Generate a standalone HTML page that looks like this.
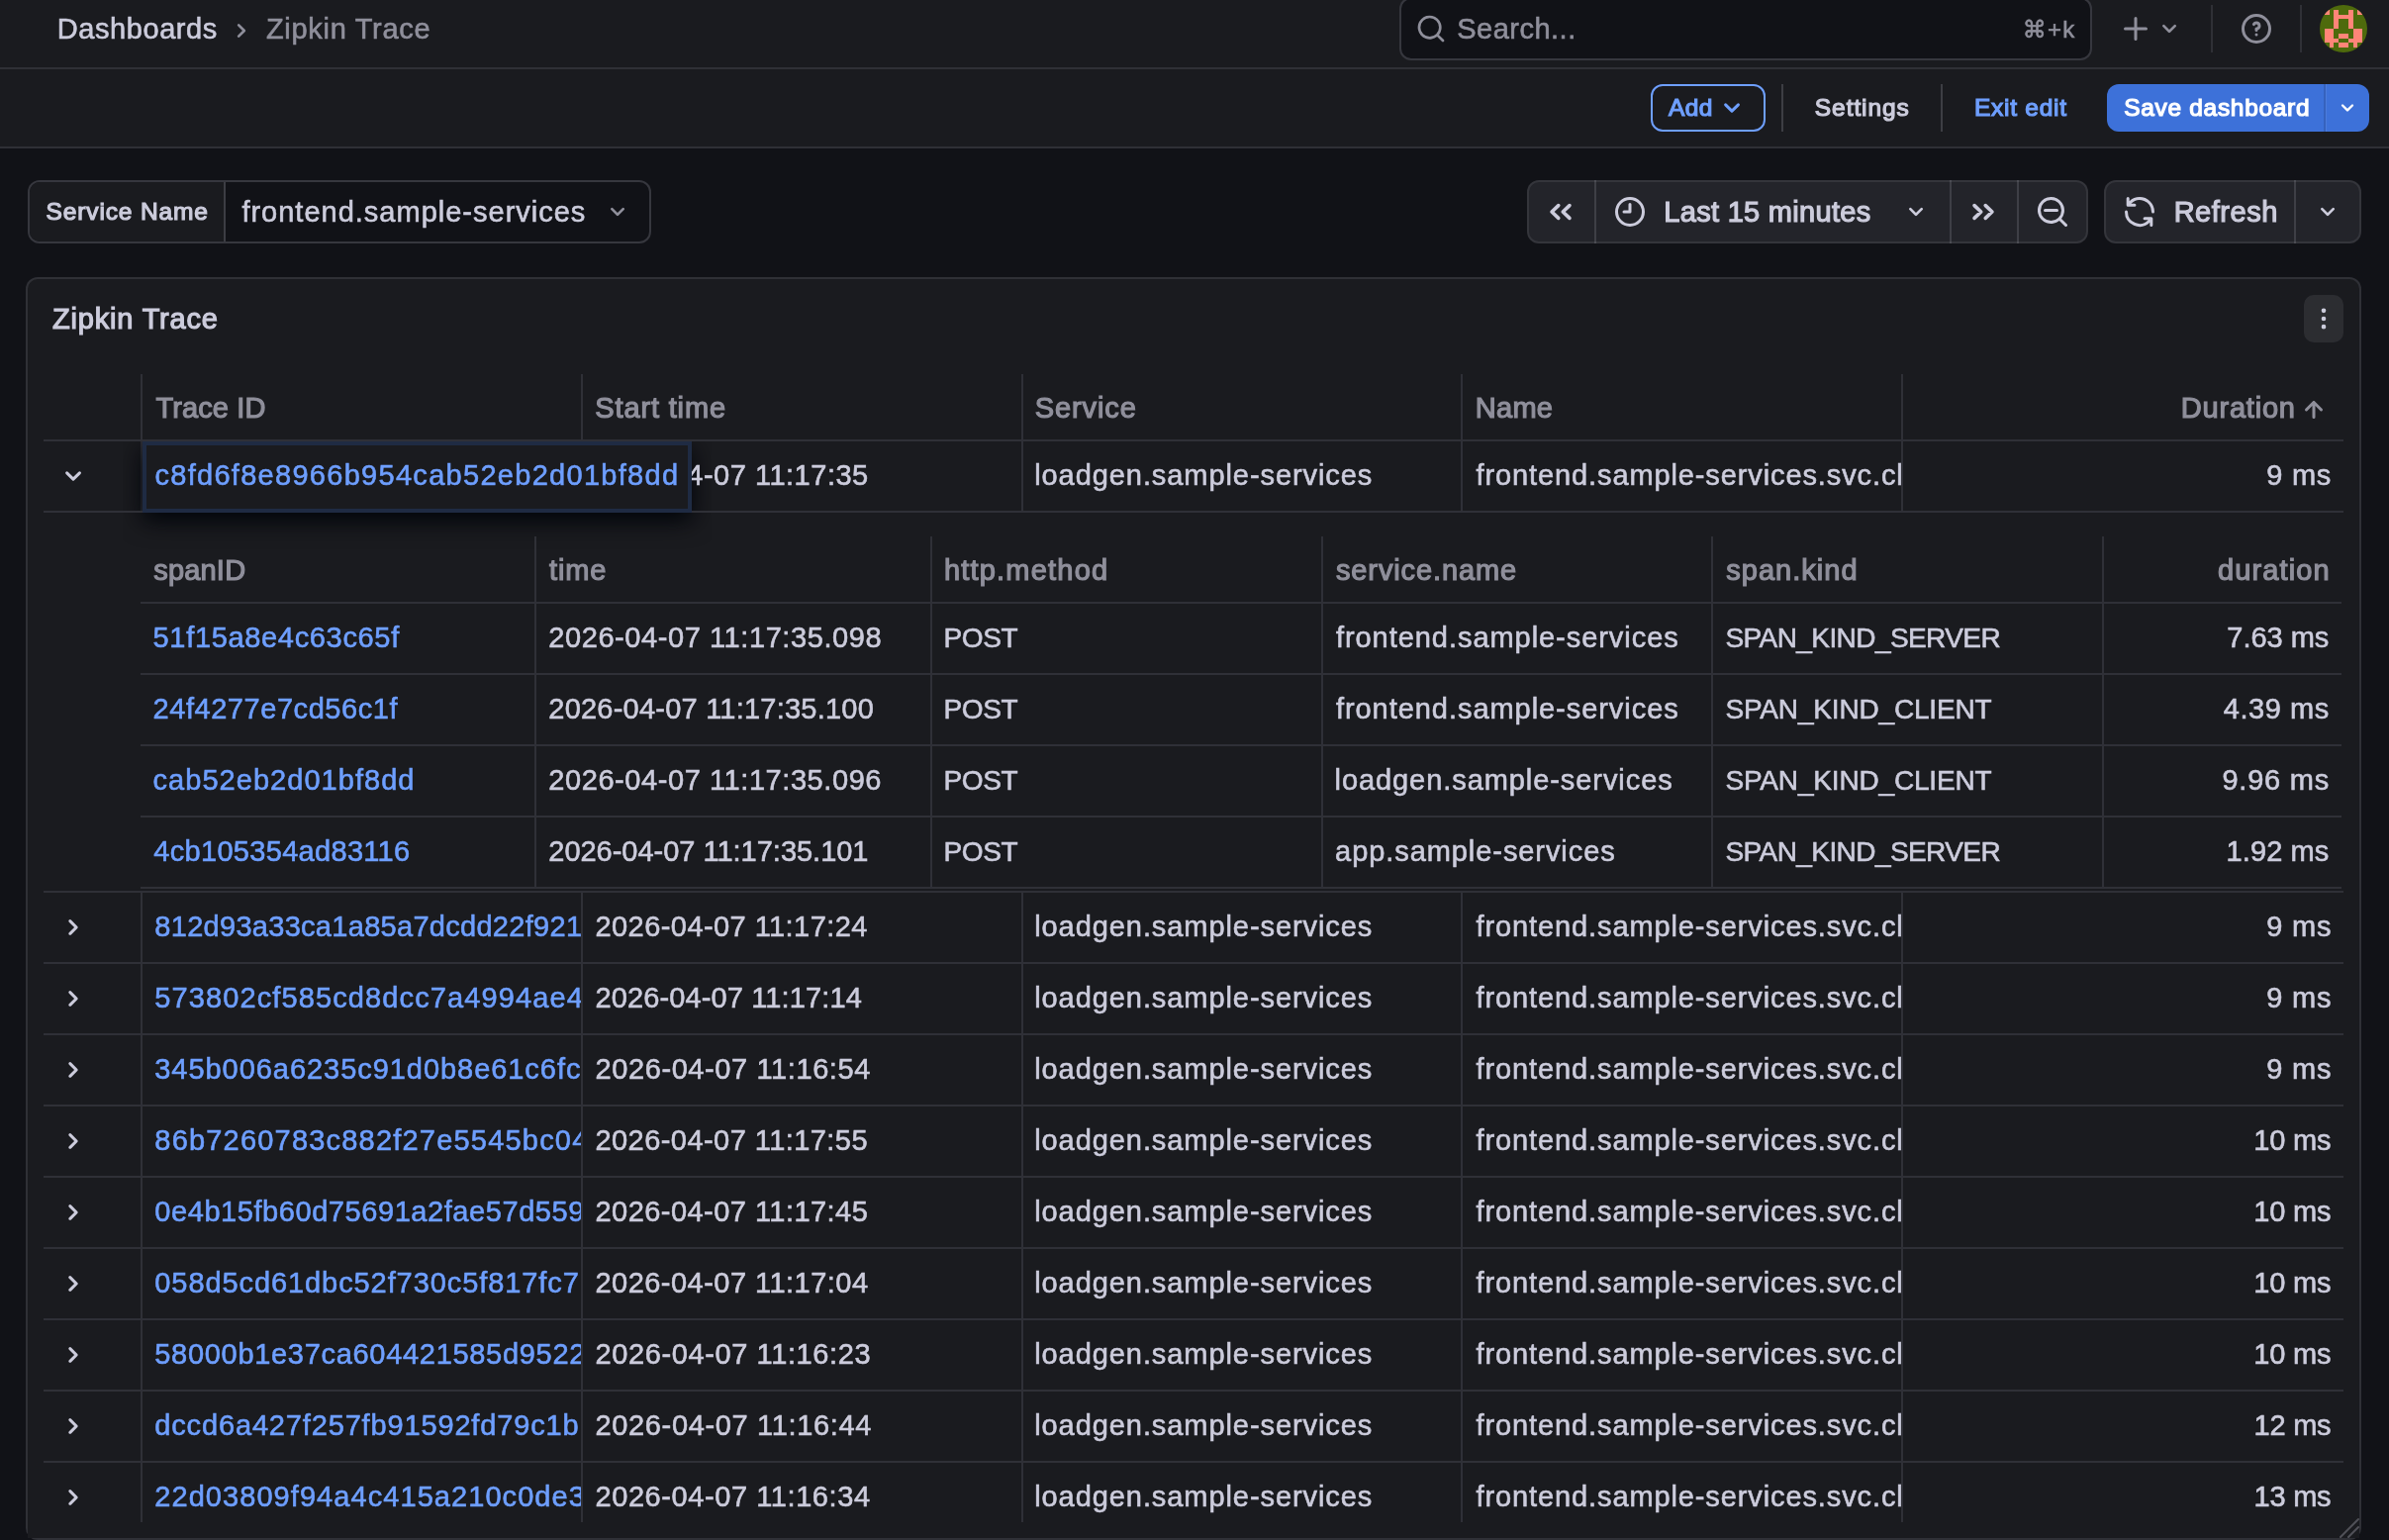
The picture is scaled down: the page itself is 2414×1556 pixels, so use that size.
<!DOCTYPE html>
<html lang="en"><head><meta charset="utf-8"><title>Zipkin Trace - Dashboards - Grafana</title>
<style>
html,body{margin:0;padding:0;background:#111217;}
body{width:2414px;height:1556px;overflow:hidden;position:relative;font-family:'Liberation Sans',sans-serif;}
.a{position:absolute;display:block;}
.t{position:absolute;white-space:pre;font-family:'Liberation Sans',sans-serif;font-weight:400;}
.clip{overflow:hidden;}
#root{position:absolute;left:0;top:0;width:2414px;height:1556px;will-change:transform;}
</style></head><body><div id="root">
<div class="a" style="left:0px;top:0px;width:2414px;height:150px;background:#1a1b1f;"></div>
<div class="a" style="left:0px;top:68px;width:2414px;height:2px;background:rgba(204,204,220,0.12);"></div>
<div class="a" style="left:0px;top:148px;width:2414px;height:2px;background:rgba(204,204,220,0.12);"></div>
<span class="t" style="left:57.72px;top:13.00px;font-size:29px;line-height:32px;letter-spacing:0.579px;color:#ccccdc;-webkit-text-stroke:0.6px currentColor;">Dashboards</span>
<svg class="a" style="left:227.5px;top:15.0px" width="32" height="32" viewBox="0 0 24 24" fill="#8f8f9b"><path d="M14.83,11.29,10.59,7.05a1,1,0,0,0-1.42,0,1,1,0,0,0,0,1.41L12.71,12,9.17,15.54a1,1,0,0,0,0,1.41,1,1,0,0,0,.71.29,1,1,0,0,0,.71-.29l4.24-4.24A1,1,0,0,0,14.83,11.29Z"/></svg>
<span class="t" style="left:268.92px;top:13.00px;font-size:29px;line-height:32px;letter-spacing:0.700px;color:#8f8f9b;-webkit-text-stroke:0.6px currentColor;">Zipkin Trace</span>
<div class="a" style="left:1414px;top:-3px;width:700px;height:64px;box-sizing:border-box;border:2px solid rgba(204,204,220,0.20);border-radius:12px;background:#111217"></div>
<svg class="a" style="left:1430.0px;top:13.0px" width="32" height="32" viewBox="0 0 24 24" fill="#8f8f9b"><path d="M21.71,20.29,18,16.61A9,9,0,1,0,16.61,18l3.68,3.68a1,1,0,0,0,1.42,0A1,1,0,0,0,21.71,20.29ZM11,18a7,7,0,1,1,7-7A7,7,0,0,1,11,18Z"/></svg>
<span class="t" style="left:1472.21px;top:13.00px;font-size:29px;line-height:32px;letter-spacing:0.497px;color:#8f8f9b;-webkit-text-stroke:0.6px currentColor;">Search...</span>
<span class="t" style="left:2043.85px;top:16.00px;font-size:24px;line-height:27px;letter-spacing:1.233px;color:#8f8f9b;font-family:'Liberation Sans','DejaVu Sans',sans-serif;-webkit-text-stroke:0.6px currentColor;">⌘+k</span>
<svg class="a" style="left:2140.0px;top:11.0px" width="36" height="36" viewBox="0 0 24 24" fill="#8f8f9b"><path d="M19,11H13V5a1,1,0,0,0-2,0v6H5a1,1,0,0,0,0,2h6v6a1,1,0,0,0,2,0V13h6a1,1,0,0,0,0-2Z"/></svg>
<svg class="a" style="left:2176.0px;top:13.0px" width="32" height="32" viewBox="0 0 24 24" fill="#8f8f9b"><path d="M17,9.17a1,1,0,0,0-1.41,0L12,12.71,8.46,9.17a1,1,0,0,0-1.41,0,1,1,0,0,0,0,1.42l4.24,4.24a1,1,0,0,0,1.42,0L17,10.59A1,1,0,0,0,17,9.17Z"/></svg>
<div class="a" style="left:2234px;top:5px;width:2px;height:48px;background:rgba(204,204,220,0.12);"></div>
<svg class="a" style="left:2262.0px;top:11.0px" width="36" height="36" viewBox="0 0 24 24" fill="#8f8f9b"><path d="M11.29,15.29a1.58,1.58,0,0,0-.12.15.76.76,0,0,0-.09.18.64.64,0,0,0-.06.18,1.36,1.36,0,0,0,0,.2.84.84,0,0,0,.08.38.9.9,0,0,0,.54.54.94.94,0,0,0,.76,0,.9.9,0,0,0,.54-.54A1,1,0,0,0,13,16a1,1,0,0,0-.29-.71A1,1,0,0,0,11.29,15.29ZM12,2A10,10,0,1,0,22,12,10,10,0,0,0,12,2Zm0,18a8,8,0,1,1,8-8A8,8,0,0,1,12,20ZM12,7A3,3,0,0,0,9.4,8.5a1,1,0,1,0,1.73,1A1,1,0,0,1,12,9a1,1,0,0,1,0,2,1,1,0,0,0-1,1v1a1,1,0,0,0,2,0v-.18A3,3,0,0,0,12,7Z"/></svg>
<div class="a" style="left:2324px;top:5px;width:2px;height:48px;background:rgba(204,204,220,0.12);"></div>
<svg class="a" style="left:2344px;top:5px" width="48" height="48" viewBox="0 0 48 48" shape-rendering="crispEdges"><defs><clipPath id="av"><circle cx="24" cy="24" r="24"/></clipPath></defs><g clip-path="url(#av)"><rect width="48" height="48" fill="#4e6a0c"/><rect x="4.80" y="4.80" width="4.80" height="4.80" fill="#ff8578"/><rect x="14.40" y="4.80" width="4.80" height="4.80" fill="#ff8578"/><rect x="28.80" y="4.80" width="4.80" height="4.80" fill="#ff8578"/><rect x="38.40" y="4.80" width="4.80" height="4.80" fill="#ff8578"/><rect x="14.40" y="9.60" width="4.80" height="4.80" fill="#ff8578"/><rect x="19.20" y="9.60" width="4.80" height="4.80" fill="#ff8578"/><rect x="24.00" y="9.60" width="4.80" height="4.80" fill="#ff8578"/><rect x="28.80" y="9.60" width="4.80" height="4.80" fill="#ff8578"/><rect x="14.40" y="14.40" width="4.80" height="4.80" fill="#ff8578"/><rect x="28.80" y="14.40" width="4.80" height="4.80" fill="#ff8578"/><rect x="14.40" y="19.20" width="4.80" height="4.80" fill="#ff8578"/><rect x="28.80" y="19.20" width="4.80" height="4.80" fill="#ff8578"/><rect x="4.80" y="24.00" width="4.80" height="4.80" fill="#ff8578"/><rect x="9.60" y="24.00" width="4.80" height="4.80" fill="#ff8578"/><rect x="33.60" y="24.00" width="4.80" height="4.80" fill="#ff8578"/><rect x="38.40" y="24.00" width="4.80" height="4.80" fill="#ff8578"/><rect x="4.80" y="28.80" width="4.80" height="4.80" fill="#ff8578"/><rect x="9.60" y="28.80" width="4.80" height="4.80" fill="#ff8578"/><rect x="19.20" y="28.80" width="4.80" height="4.80" fill="#ff8578"/><rect x="24.00" y="28.80" width="4.80" height="4.80" fill="#ff8578"/><rect x="33.60" y="28.80" width="4.80" height="4.80" fill="#ff8578"/><rect x="38.40" y="28.80" width="4.80" height="4.80" fill="#ff8578"/><rect x="4.80" y="33.60" width="4.80" height="4.80" fill="#ff8578"/><rect x="9.60" y="33.60" width="4.80" height="4.80" fill="#ff8578"/><rect x="14.40" y="33.60" width="4.80" height="4.80" fill="#ff8578"/><rect x="28.80" y="33.60" width="4.80" height="4.80" fill="#ff8578"/><rect x="33.60" y="33.60" width="4.80" height="4.80" fill="#ff8578"/><rect x="38.40" y="33.60" width="4.80" height="4.80" fill="#ff8578"/><rect x="9.60" y="38.40" width="4.80" height="4.80" fill="#ff8578"/><rect x="19.20" y="38.40" width="4.80" height="4.80" fill="#ff8578"/><rect x="24.00" y="38.40" width="4.80" height="4.80" fill="#ff8578"/><rect x="33.60" y="38.40" width="4.80" height="4.80" fill="#ff8578"/></g></svg>
<div class="a" style="left:1668px;top:85px;width:116px;height:48px;box-sizing:border-box;border:2px solid #6e9fff;border-radius:12px"></div>
<span class="t" style="left:1685.91px;top:95.00px;font-size:24.5px;line-height:27px;letter-spacing:0.431px;color:#6e9fff;-webkit-text-stroke:1.2px currentColor;">Add</span>
<svg class="a" style="left:1732.2px;top:91.2px" width="36" height="36" viewBox="0 0 24 24" fill="#6e9fff"><path d="M17,9.17a1,1,0,0,0-1.41,0L12,12.71,8.46,9.17a1,1,0,0,0-1.41,0,1,1,0,0,0,0,1.42l4.24,4.24a1,1,0,0,0,1.42,0L17,10.59A1,1,0,0,0,17,9.17Z"/></svg>
<div class="a" style="left:1800px;top:85px;width:2px;height:48px;background:rgba(204,204,220,0.20);"></div>
<span class="t" style="left:1833.83px;top:95.00px;font-size:24.5px;line-height:27px;letter-spacing:0.925px;color:#ccccdc;-webkit-text-stroke:1.2px currentColor;">Settings</span>
<div class="a" style="left:1961px;top:85px;width:2px;height:48px;background:rgba(204,204,220,0.20);"></div>
<span class="t" style="left:1994.96px;top:95.00px;font-size:24.5px;line-height:27px;letter-spacing:0.747px;color:#6e9fff;-webkit-text-stroke:1.2px currentColor;">Exit edit</span>
<div class="a" style="left:2129px;top:85px;width:265px;height:48px;border-radius:12px;background:#3d71d9"></div>
<div class="a" style="left:2348px;top:85px;width:2px;height:48px;background:rgba(0,0,0,0.13);"></div>
<div class="a" style="left:2350px;top:85px;width:1px;height:48px;background:rgba(255,255,255,0.08);"></div>
<span class="t" style="left:2146.24px;top:95.00px;font-size:24.5px;line-height:27px;letter-spacing:0.683px;color:#ffffff;-webkit-text-stroke:1.2px currentColor;">Save dashboard</span>
<svg class="a" style="left:2358.0px;top:95.0px" width="28" height="28" viewBox="0 0 24 24" fill="#ffffff"><path d="M17,9.17a1,1,0,0,0-1.41,0L12,12.71,8.46,9.17a1,1,0,0,0-1.41,0,1,1,0,0,0,0,1.42l4.24,4.24a1,1,0,0,0,1.42,0L17,10.59A1,1,0,0,0,17,9.17Z"/></svg>
<div class="a" style="left:28px;top:182px;width:630px;height:64px;box-sizing:border-box;border:2px solid rgba(204,204,220,0.20);border-radius:12px;background:#111217;overflow:hidden"><div class="a" style="left:0;top:0;width:196px;height:60px;background:#1a1b1f;border-right:2px solid rgba(204,204,220,0.20)"></div></div>
<span class="t" style="left:46.62px;top:200.00px;font-size:24.5px;line-height:27px;letter-spacing:0.864px;color:#ccccdc;-webkit-text-stroke:1.2px currentColor;">Service Name</span>
<span class="t" style="left:244.42px;top:198.00px;font-size:29px;line-height:32px;letter-spacing:0.999px;color:#ccccdc;-webkit-text-stroke:0.6px currentColor;">frontend.sample-services</span>
<svg class="a" style="left:608.0px;top:198.0px" width="32" height="32" viewBox="0 0 24 24" fill="#8f8f9b"><path d="M17,9.17a1,1,0,0,0-1.41,0L12,12.71,8.46,9.17a1,1,0,0,0-1.41,0,1,1,0,0,0,0,1.42l4.24,4.24a1,1,0,0,0,1.42,0L17,10.59A1,1,0,0,0,17,9.17Z"/></svg>
<div class="a" style="left:1543px;top:182px;width:567px;height:64px;box-sizing:border-box;border:2px solid rgba(204,204,220,0.10);border-radius:12px;background:#23242a"></div>
<div class="a" style="left:1611px;top:182px;width:2px;height:64px;background:rgba(204,204,220,0.16);"></div>
<div class="a" style="left:1970px;top:182px;width:2px;height:64px;background:rgba(204,204,220,0.16);"></div>
<div class="a" style="left:2038px;top:182px;width:2px;height:64px;background:rgba(204,204,220,0.16);"></div>
<svg class="a" style="left:0;top:0" width="2414" height="300" viewBox="0 0 2414 300" fill="none" stroke="#ccccdc" stroke-width="3.6" stroke-linecap="round" stroke-linejoin="round"><path d="M1574.75,207.60L1568.05,214.00L1574.75,220.40 M1585.95,207.60L1579.25,214.00L1585.95,220.40"/></svg>
<svg class="a" style="left:1629.0px;top:196.0px" width="36" height="36" viewBox="0 0 24 24" fill="#ccccdc"><path d="M12,2A10,10,0,1,0,22,12,10,10,0,0,0,12,2Zm0,18a8,8,0,1,1,8-8A8,8,0,0,1,12,20ZM12,6a1,1,0,0,0-1,1v4H8a1,1,0,0,0,0,2h4a1,1,0,0,0,1-1V7A1,1,0,0,0,12,6Z"/></svg>
<span class="t" style="left:1681.33px;top:198.00px;font-size:29px;line-height:32px;letter-spacing:0.294px;color:#ccccdc;-webkit-text-stroke:1.2px currentColor;">Last 15 minutes</span>
<svg class="a" style="left:1920.0px;top:198.0px" width="32" height="32" viewBox="0 0 24 24" fill="#ccccdc"><path d="M17,9.17a1,1,0,0,0-1.41,0L12,12.71,8.46,9.17a1,1,0,0,0-1.41,0,1,1,0,0,0,0,1.42l4.24,4.24a1,1,0,0,0,1.42,0L17,10.59A1,1,0,0,0,17,9.17Z"/></svg>
<svg class="a" style="left:0;top:0" width="2414" height="300" viewBox="0 0 2414 300" fill="none" stroke="#ccccdc" stroke-width="3.6" stroke-linecap="round" stroke-linejoin="round"><path d="M1995.05,207.60L2001.75,214.00L1995.05,220.40 M2006.25,207.60L2012.95,214.00L2006.25,220.40"/></svg>
<svg class="a" style="left:2056.0px;top:196.0px" width="36" height="36" viewBox="0 0 24 24" fill="#ccccdc"><path d="M21.71,20.29,18,16.61A9,9,0,1,0,16.61,18l3.68,3.68a1,1,0,0,0,1.42,0A1,1,0,0,0,21.71,20.29ZM11,18a7,7,0,1,1,7-7A7,7,0,0,1,11,18ZM15,10H7a1,1,0,0,0,0,2h8a1,1,0,0,0,0-2Z"/></svg>
<div class="a" style="left:2126px;top:182px;width:260px;height:64px;box-sizing:border-box;border:2px solid rgba(204,204,220,0.10);border-radius:12px;background:#23242a"></div>
<div class="a" style="left:2318px;top:182px;width:2px;height:64px;background:rgba(204,204,220,0.16);"></div>
<svg class="a" style="left:2144.0px;top:196.0px" width="36" height="36" viewBox="0 0 24 24" fill="#ccccdc"><path d="M19.91,15.51H15.38a1,1,0,0,0,0,2h2.4A8,8,0,0,1,4,12a1,1,0,0,0-2,0,10,10,0,0,0,16.88,7.23V21a1,1,0,0,0,2,0V16.5A1,1,0,0,0,19.91,15.51ZM12,2A10,10,0,0,0,5.12,4.77V3a1,1,0,0,0-2,0V7.5a1,1,0,0,0,1,1h4.5a1,1,0,0,0,0-2H6.22A8,8,0,0,1,20,12a1,1,0,0,0,2,0A10,10,0,0,0,12,2Z"/></svg>
<span class="t" style="left:2196.66px;top:198.00px;font-size:29px;line-height:32px;letter-spacing:0.512px;color:#ccccdc;-webkit-text-stroke:1.2px currentColor;">Refresh</span>
<svg class="a" style="left:2336.0px;top:198.0px" width="32" height="32" viewBox="0 0 24 24" fill="#ccccdc"><path d="M17,9.17a1,1,0,0,0-1.41,0L12,12.71,8.46,9.17a1,1,0,0,0-1.41,0,1,1,0,0,0,0,1.42l4.24,4.24a1,1,0,0,0,1.42,0L17,10.59A1,1,0,0,0,17,9.17Z"/></svg>
<div class="a" style="left:26px;top:280px;width:2360px;height:1276px;box-sizing:border-box;border:2px solid rgba(204,204,220,0.12);border-radius:12px;background:#1a1b1f"></div>
<span class="t" style="left:53.01px;top:306.00px;font-size:29px;line-height:32px;letter-spacing:0.822px;color:#ccccdc;-webkit-text-stroke:1.2px currentColor;">Zipkin Trace</span>
<div class="a" style="left:2328px;top:298px;width:40px;height:48px;border-radius:10px;background:rgba(204,204,220,0.10)"></div>
<svg class="a" style="left:2334.0px;top:308.0px" width="28" height="28" viewBox="0 0 24 24" fill="#ccccdc"><path d="M12,7a2,2,0,1,0-2-2A2,2,0,0,0,12,7Zm0,10a2,2,0,1,0,2,2A2,2,0,0,0,12,17Zm0-7a2,2,0,1,0,2,2A2,2,0,0,0,12,10Z"/></svg>
<div class="a" style="left:142px;top:378px;width:2px;height:1160px;background:#2f3037;"></div>
<div class="a" style="left:587px;top:378px;width:2px;height:1160px;background:#2f3037;"></div>
<div class="a" style="left:1032px;top:378px;width:2px;height:1160px;background:#2f3037;"></div>
<div class="a" style="left:1476px;top:378px;width:2px;height:1160px;background:#2f3037;"></div>
<div class="a" style="left:1921px;top:378px;width:2px;height:1160px;background:#2f3037;"></div>
<div class="a" style="left:44px;top:444px;width:2324px;height:2px;background:#2f3037;"></div>
<span class="t" style="left:157.43px;top:396.00px;font-size:29px;line-height:32px;letter-spacing:0.119px;color:#8f8f9b;-webkit-text-stroke:1.2px currentColor;">Trace ID</span>
<span class="t" style="left:601.32px;top:396.00px;font-size:29px;line-height:32px;letter-spacing:0.847px;color:#8f8f9b;-webkit-text-stroke:1.2px currentColor;">Start time</span>
<span class="t" style="left:1045.75px;top:396.00px;font-size:29px;line-height:32px;letter-spacing:0.898px;color:#8f8f9b;-webkit-text-stroke:1.2px currentColor;">Service</span>
<span class="t" style="left:1490.81px;top:396.00px;font-size:29px;line-height:32px;letter-spacing:0.278px;color:#8f8f9b;-webkit-text-stroke:1.2px currentColor;">Name</span>
<span class="t" style="left:2203.83px;top:396.00px;font-size:29px;line-height:32px;letter-spacing:0.785px;color:#8f8f9b;-webkit-text-stroke:1.2px currentColor;">Duration</span>
<svg class="a" style="left:2320.0px;top:396.0px" width="36" height="36" viewBox="0 0 24 24" fill="#8f8f9b"><path d="M17.71,11.29l-5-5a1,1,0,0,0-.33-.21,1,1,0,0,0-.76,0,1,1,0,0,0-.33.21l-5,5a1,1,0,0,0,1.42,1.42L11,9.41V17a1,1,0,0,0,2,0V9.41l3.29,3.3a1,1,0,0,0,1.42,0A1,1,0,0,0,17.71,11.29Z"/></svg>
<div class="a" style="left:44px;top:518px;width:2324px;height:382px;background:#1a1b1f;"></div>
<div class="a" style="left:44px;top:900px;width:2324px;height:2px;background:#2f3037;"></div>
<div class="a" style="left:144px;top:446px;width:555px;height:72px;box-shadow:0 8px 24px rgb(1,4,9);clip-path:inset(0 -20px -48px -20px)"></div>
<div class="a" style="left:44px;top:516px;width:2324px;height:2px;background:#2f3037;"></div>
<svg class="a" style="left:56.0px;top:462.5px" width="36" height="36" viewBox="0 0 24 24" fill="#ccccdc"><path d="M17,9.17a1,1,0,0,0-1.41,0L12,12.71,8.46,9.17a1,1,0,0,0-1.41,0,1,1,0,0,0,0,1.42l4.24,4.24a1,1,0,0,0,1.42,0L17,10.59A1,1,0,0,0,17,9.17Z"/></svg>
<span class="t" style="left:600.90px;top:464.00px;font-size:29px;line-height:32px;letter-spacing:0.511px;color:#ccccdc;-webkit-text-stroke:0.6px currentColor;">2026-04-07 11:17:35</span>
<span class="t" style="left:1045.20px;top:464.00px;font-size:29px;line-height:32px;letter-spacing:0.927px;color:#ccccdc;-webkit-text-stroke:0.6px currentColor;">loadgen.sample-services</span>
<div class="a clip" id="n0" style="left:1478px;top:446px;width:443px;height:70px"><span class="t" style="left:13.50px;top:18.00px;font-size:29px;line-height:32px;letter-spacing:0.891px;color:#ccccdc;-webkit-text-stroke:0.6px currentColor;">frontend.sample-services.svc.cl<span style="padding-left:8px">uster.local</span></span></div>
<span class="t" style="left:2290.24px;top:464.00px;font-size:29px;line-height:32px;letter-spacing:0.738px;color:#ccccdc;-webkit-text-stroke:0.6px currentColor;">9 ms</span>
<div class="a" style="left:144px;top:446px;width:555px;height:72px;box-sizing:border-box;border:4px solid #1f2b43;background:#1a1b1f"></div>
<span class="t" style="left:156.48px;top:464.00px;font-size:29px;line-height:32px;letter-spacing:1.288px;color:#6e9fff;-webkit-text-stroke:0.6px currentColor;">c8fd6f8e8966b954cab52eb2d01bf8dd</span>
<div class="a" style="left:540px;top:542px;width:2px;height:355px;background:#2f3037;"></div>
<div class="a" style="left:940px;top:542px;width:2px;height:355px;background:#2f3037;"></div>
<div class="a" style="left:1335px;top:542px;width:2px;height:355px;background:#2f3037;"></div>
<div class="a" style="left:1729px;top:542px;width:2px;height:355px;background:#2f3037;"></div>
<div class="a" style="left:2124px;top:542px;width:2px;height:355px;background:#2f3037;"></div>
<div class="a" style="left:142px;top:608px;width:2224px;height:2px;background:#2f3037;"></div>
<div class="a" style="left:142px;top:680px;width:2224px;height:2px;background:#2f3037;"></div>
<div class="a" style="left:142px;top:752px;width:2224px;height:2px;background:#2f3037;"></div>
<div class="a" style="left:142px;top:824px;width:2224px;height:2px;background:#2f3037;"></div>
<div class="a" style="left:142px;top:896px;width:2224px;height:2px;background:#2f3037;"></div>
<span class="t" style="left:155.18px;top:560.00px;font-size:29px;line-height:32px;letter-spacing:0.204px;color:#8f8f9b;-webkit-text-stroke:1.2px currentColor;">spanID</span>
<span class="t" style="left:554.93px;top:560.00px;font-size:29px;line-height:32px;letter-spacing:0.897px;color:#8f8f9b;-webkit-text-stroke:1.2px currentColor;">time</span>
<span class="t" style="left:953.88px;top:560.00px;font-size:29px;line-height:32px;letter-spacing:1.206px;color:#8f8f9b;-webkit-text-stroke:1.2px currentColor;">http.method</span>
<span class="t" style="left:1349.92px;top:560.00px;font-size:29px;line-height:32px;letter-spacing:0.898px;color:#8f8f9b;-webkit-text-stroke:1.2px currentColor;">service.name</span>
<span class="t" style="left:1744.21px;top:560.00px;font-size:29px;line-height:32px;letter-spacing:1.022px;color:#8f8f9b;-webkit-text-stroke:1.2px currentColor;">span.kind</span>
<span class="t" style="left:2241.01px;top:560.00px;font-size:29px;line-height:32px;letter-spacing:1.126px;color:#8f8f9b;-webkit-text-stroke:1.2px currentColor;">duration</span>
<span class="t" style="left:154.59px;top:628.00px;font-size:29px;line-height:32px;letter-spacing:0.664px;color:#6e9fff;-webkit-text-stroke:0.6px currentColor;">51f15a8e4c63c65f</span>
<span class="t" style="left:554.29px;top:628.00px;font-size:29px;line-height:32px;letter-spacing:0.577px;color:#ccccdc;-webkit-text-stroke:0.6px currentColor;">2026-04-07 11:17:35.098</span>
<span class="t" style="left:953.49px;top:629.00px;font-size:28px;line-height:31px;letter-spacing:-0.352px;color:#ccccdc;-webkit-text-stroke:0.6px currentColor;">POST</span>
<span class="t" style="left:1349.95px;top:628.00px;font-size:29px;line-height:32px;letter-spacing:0.948px;color:#ccccdc;-webkit-text-stroke:0.6px currentColor;">frontend.sample-services</span>
<span class="t" style="left:1743.42px;top:629.00px;font-size:28px;line-height:31px;letter-spacing:-0.572px;color:#ccccdc;-webkit-text-stroke:0.6px currentColor;">SPAN_KIND_SERVER</span>
<span class="t" style="left:2250.37px;top:628.00px;font-size:29px;line-height:32px;letter-spacing:-0.038px;color:#ccccdc;-webkit-text-stroke:0.6px currentColor;">7.63 ms</span>
<span class="t" style="left:154.53px;top:700.00px;font-size:29px;line-height:32px;letter-spacing:0.553px;color:#6e9fff;-webkit-text-stroke:0.6px currentColor;">24f4277e7cd56c1f</span>
<span class="t" style="left:554.29px;top:700.00px;font-size:29px;line-height:32px;letter-spacing:0.223px;color:#ccccdc;-webkit-text-stroke:0.6px currentColor;">2026-04-07 11:17:35.100</span>
<span class="t" style="left:953.49px;top:701.00px;font-size:28px;line-height:31px;letter-spacing:-0.352px;color:#ccccdc;-webkit-text-stroke:0.6px currentColor;">POST</span>
<span class="t" style="left:1349.95px;top:700.00px;font-size:29px;line-height:32px;letter-spacing:0.948px;color:#ccccdc;-webkit-text-stroke:0.6px currentColor;">frontend.sample-services</span>
<span class="t" style="left:1743.42px;top:701.00px;font-size:28px;line-height:31px;letter-spacing:-0.173px;color:#ccccdc;-webkit-text-stroke:0.6px currentColor;">SPAN_KIND_CLIENT</span>
<span class="t" style="left:2246.76px;top:700.00px;font-size:29px;line-height:32px;letter-spacing:0.564px;color:#ccccdc;-webkit-text-stroke:0.6px currentColor;">4.39 ms</span>
<span class="t" style="left:154.51px;top:772.00px;font-size:29px;line-height:32px;letter-spacing:1.042px;color:#6e9fff;-webkit-text-stroke:0.6px currentColor;">cab52eb2d01bf8dd</span>
<span class="t" style="left:554.29px;top:772.00px;font-size:29px;line-height:32px;letter-spacing:0.574px;color:#ccccdc;-webkit-text-stroke:0.6px currentColor;">2026-04-07 11:17:35.096</span>
<span class="t" style="left:953.49px;top:773.00px;font-size:28px;line-height:31px;letter-spacing:-0.352px;color:#ccccdc;-webkit-text-stroke:0.6px currentColor;">POST</span>
<span class="t" style="left:1348.52px;top:772.00px;font-size:29px;line-height:32px;letter-spacing:0.929px;color:#ccccdc;-webkit-text-stroke:0.6px currentColor;">loadgen.sample-services</span>
<span class="t" style="left:1743.42px;top:773.00px;font-size:28px;line-height:31px;letter-spacing:-0.173px;color:#ccccdc;-webkit-text-stroke:0.6px currentColor;">SPAN_KIND_CLIENT</span>
<span class="t" style="left:2245.43px;top:772.00px;font-size:29px;line-height:32px;letter-spacing:0.785px;color:#ccccdc;-webkit-text-stroke:0.6px currentColor;">9.96 ms</span>
<span class="t" style="left:155.25px;top:844.00px;font-size:29px;line-height:32px;letter-spacing:0.310px;color:#6e9fff;-webkit-text-stroke:0.6px currentColor;">4cb105354ad83116</span>
<span class="t" style="left:554.29px;top:844.00px;font-size:29px;line-height:32px;letter-spacing:-0.016px;color:#ccccdc;-webkit-text-stroke:0.6px currentColor;">2026-04-07 11:17:35.101</span>
<span class="t" style="left:953.49px;top:845.00px;font-size:28px;line-height:31px;letter-spacing:-0.352px;color:#ccccdc;-webkit-text-stroke:0.6px currentColor;">POST</span>
<span class="t" style="left:1349.10px;top:844.00px;font-size:29px;line-height:32px;letter-spacing:0.927px;color:#ccccdc;-webkit-text-stroke:0.6px currentColor;">app.sample-services</span>
<span class="t" style="left:1743.42px;top:845.00px;font-size:28px;line-height:31px;letter-spacing:-0.572px;color:#ccccdc;-webkit-text-stroke:0.6px currentColor;">SPAN_KIND_SERVER</span>
<span class="t" style="left:2249.61px;top:844.00px;font-size:29px;line-height:32px;letter-spacing:0.089px;color:#ccccdc;-webkit-text-stroke:0.6px currentColor;">1.92 ms</span>
<div class="a" style="left:44px;top:972px;width:2324px;height:2px;background:#2f3037;"></div>
<svg class="a" style="left:55.5px;top:918.5px" width="36" height="36" viewBox="0 0 24 24" fill="#ccccdc"><path d="M14.83,11.29,10.59,7.05a1,1,0,0,0-1.42,0,1,1,0,0,0,0,1.41L12.71,12,9.17,15.54a1,1,0,0,0,0,1.41,1,1,0,0,0,.71.29,1,1,0,0,0,.71-.29l4.24-4.24A1,1,0,0,0,14.83,11.29Z"/></svg>
<div class="a clip" id="i0" style="left:144px;top:902px;width:443px;height:70px"><span class="t" style="left:12.30px;top:18.00px;font-size:29px;line-height:32px;letter-spacing:0.292px;color:#6e9fff;-webkit-text-stroke:0.6px currentColor;">812d93a33ca1a85a7dcdd22f921<span style="padding-left:8px">c4e7b</span></span></div>
<span class="t" style="left:601.49px;top:920.00px;font-size:29px;line-height:32px;letter-spacing:0.432px;color:#ccccdc;-webkit-text-stroke:0.6px currentColor;">2026-04-07 11:17:24</span>
<span class="t" style="left:1045.20px;top:920.00px;font-size:29px;line-height:32px;letter-spacing:0.927px;color:#ccccdc;-webkit-text-stroke:0.6px currentColor;">loadgen.sample-services</span>
<div class="a clip" id="m0" style="left:1478px;top:902px;width:443px;height:70px"><span class="t" style="left:13.50px;top:18.00px;font-size:29px;line-height:32px;letter-spacing:0.891px;color:#ccccdc;-webkit-text-stroke:0.6px currentColor;">frontend.sample-services.svc.cl<span style="padding-left:8px">uster.local</span></span></div>
<span class="t" style="left:2290.24px;top:920.00px;font-size:29px;line-height:32px;letter-spacing:0.825px;color:#ccccdc;-webkit-text-stroke:0.6px currentColor;">9 ms</span>
<div class="a" style="left:44px;top:1044px;width:2324px;height:2px;background:#2f3037;"></div>
<svg class="a" style="left:55.5px;top:990.5px" width="36" height="36" viewBox="0 0 24 24" fill="#ccccdc"><path d="M14.83,11.29,10.59,7.05a1,1,0,0,0-1.42,0,1,1,0,0,0,0,1.41L12.71,12,9.17,15.54a1,1,0,0,0,0,1.41,1,1,0,0,0,.71.29,1,1,0,0,0,.71-.29l4.24-4.24A1,1,0,0,0,14.83,11.29Z"/></svg>
<div class="a clip" id="i1" style="left:144px;top:974px;width:443px;height:70px"><span class="t" style="left:12.30px;top:18.00px;font-size:29px;line-height:32px;letter-spacing:1.111px;color:#6e9fff;-webkit-text-stroke:0.6px currentColor;">573802cf585cd8dcc7a4994ae4<span style="padding-left:8px">d21f09</span></span></div>
<span class="t" style="left:601.49px;top:992.00px;font-size:29px;line-height:32px;letter-spacing:0.125px;color:#ccccdc;-webkit-text-stroke:0.6px currentColor;">2026-04-07 11:17:14</span>
<span class="t" style="left:1045.20px;top:992.00px;font-size:29px;line-height:32px;letter-spacing:0.927px;color:#ccccdc;-webkit-text-stroke:0.6px currentColor;">loadgen.sample-services</span>
<div class="a clip" id="m1" style="left:1478px;top:974px;width:443px;height:70px"><span class="t" style="left:13.50px;top:18.00px;font-size:29px;line-height:32px;letter-spacing:0.891px;color:#ccccdc;-webkit-text-stroke:0.6px currentColor;">frontend.sample-services.svc.cl<span style="padding-left:8px">uster.local</span></span></div>
<span class="t" style="left:2290.24px;top:992.00px;font-size:29px;line-height:32px;letter-spacing:0.825px;color:#ccccdc;-webkit-text-stroke:0.6px currentColor;">9 ms</span>
<div class="a" style="left:44px;top:1116px;width:2324px;height:2px;background:#2f3037;"></div>
<svg class="a" style="left:55.5px;top:1062.5px" width="36" height="36" viewBox="0 0 24 24" fill="#ccccdc"><path d="M14.83,11.29,10.59,7.05a1,1,0,0,0-1.42,0,1,1,0,0,0,0,1.41L12.71,12,9.17,15.54a1,1,0,0,0,0,1.41,1,1,0,0,0,.71.29,1,1,0,0,0,.71-.29l4.24-4.24A1,1,0,0,0,14.83,11.29Z"/></svg>
<div class="a clip" id="i2" style="left:144px;top:1046px;width:443px;height:70px"><span class="t" style="left:12.30px;top:18.00px;font-size:29px;line-height:32px;letter-spacing:0.949px;color:#6e9fff;-webkit-text-stroke:0.6px currentColor;">345b006a6235c91d0b8e61c6fc<span style="padding-left:8px">a93b17</span></span></div>
<span class="t" style="left:601.49px;top:1064.00px;font-size:29px;line-height:32px;letter-spacing:0.598px;color:#ccccdc;-webkit-text-stroke:0.6px currentColor;">2026-04-07 11:16:54</span>
<span class="t" style="left:1045.20px;top:1064.00px;font-size:29px;line-height:32px;letter-spacing:0.927px;color:#ccccdc;-webkit-text-stroke:0.6px currentColor;">loadgen.sample-services</span>
<div class="a clip" id="m2" style="left:1478px;top:1046px;width:443px;height:70px"><span class="t" style="left:13.50px;top:18.00px;font-size:29px;line-height:32px;letter-spacing:0.891px;color:#ccccdc;-webkit-text-stroke:0.6px currentColor;">frontend.sample-services.svc.cl<span style="padding-left:8px">uster.local</span></span></div>
<span class="t" style="left:2290.24px;top:1064.00px;font-size:29px;line-height:32px;letter-spacing:0.825px;color:#ccccdc;-webkit-text-stroke:0.6px currentColor;">9 ms</span>
<div class="a" style="left:44px;top:1188px;width:2324px;height:2px;background:#2f3037;"></div>
<svg class="a" style="left:55.5px;top:1134.5px" width="36" height="36" viewBox="0 0 24 24" fill="#ccccdc"><path d="M14.83,11.29,10.59,7.05a1,1,0,0,0-1.42,0,1,1,0,0,0,0,1.41L12.71,12,9.17,15.54a1,1,0,0,0,0,1.41,1,1,0,0,0,.71.29,1,1,0,0,0,.71-.29l4.24-4.24A1,1,0,0,0,14.83,11.29Z"/></svg>
<div class="a clip" id="i3" style="left:144px;top:1118px;width:443px;height:70px"><span class="t" style="left:12.30px;top:18.00px;font-size:29px;line-height:32px;letter-spacing:1.201px;color:#6e9fff;-webkit-text-stroke:0.6px currentColor;">86b7260783c882f27e5545bc04<span style="padding-left:8px">e8a1d2</span></span></div>
<span class="t" style="left:601.49px;top:1136.00px;font-size:29px;line-height:32px;letter-spacing:0.440px;color:#ccccdc;-webkit-text-stroke:0.6px currentColor;">2026-04-07 11:17:55</span>
<span class="t" style="left:1045.20px;top:1136.00px;font-size:29px;line-height:32px;letter-spacing:0.927px;color:#ccccdc;-webkit-text-stroke:0.6px currentColor;">loadgen.sample-services</span>
<div class="a clip" id="m3" style="left:1478px;top:1118px;width:443px;height:70px"><span class="t" style="left:13.50px;top:18.00px;font-size:29px;line-height:32px;letter-spacing:0.891px;color:#ccccdc;-webkit-text-stroke:0.6px currentColor;">frontend.sample-services.svc.cl<span style="padding-left:8px">uster.local</span></span></div>
<span class="t" style="left:2277.16px;top:1136.00px;font-size:29px;line-height:32px;letter-spacing:-0.143px;color:#ccccdc;-webkit-text-stroke:0.6px currentColor;">10 ms</span>
<div class="a" style="left:44px;top:1260px;width:2324px;height:2px;background:#2f3037;"></div>
<svg class="a" style="left:55.5px;top:1206.5px" width="36" height="36" viewBox="0 0 24 24" fill="#ccccdc"><path d="M14.83,11.29,10.59,7.05a1,1,0,0,0-1.42,0,1,1,0,0,0,0,1.41L12.71,12,9.17,15.54a1,1,0,0,0,0,1.41,1,1,0,0,0,.71.29,1,1,0,0,0,.71-.29l4.24-4.24A1,1,0,0,0,14.83,11.29Z"/></svg>
<div class="a clip" id="i4" style="left:144px;top:1190px;width:443px;height:70px"><span class="t" style="left:12.30px;top:18.00px;font-size:29px;line-height:32px;letter-spacing:0.566px;color:#6e9fff;-webkit-text-stroke:0.6px currentColor;">0e4b15fb60d75691a2fae57d559<span style="padding-left:8px">b03c7</span></span></div>
<span class="t" style="left:601.49px;top:1208.00px;font-size:29px;line-height:32px;letter-spacing:0.455px;color:#ccccdc;-webkit-text-stroke:0.6px currentColor;">2026-04-07 11:17:45</span>
<span class="t" style="left:1045.20px;top:1208.00px;font-size:29px;line-height:32px;letter-spacing:0.927px;color:#ccccdc;-webkit-text-stroke:0.6px currentColor;">loadgen.sample-services</span>
<div class="a clip" id="m4" style="left:1478px;top:1190px;width:443px;height:70px"><span class="t" style="left:13.50px;top:18.00px;font-size:29px;line-height:32px;letter-spacing:0.891px;color:#ccccdc;-webkit-text-stroke:0.6px currentColor;">frontend.sample-services.svc.cl<span style="padding-left:8px">uster.local</span></span></div>
<span class="t" style="left:2277.16px;top:1208.00px;font-size:29px;line-height:32px;letter-spacing:-0.143px;color:#ccccdc;-webkit-text-stroke:0.6px currentColor;">10 ms</span>
<div class="a" style="left:44px;top:1332px;width:2324px;height:2px;background:#2f3037;"></div>
<svg class="a" style="left:55.5px;top:1278.5px" width="36" height="36" viewBox="0 0 24 24" fill="#ccccdc"><path d="M14.83,11.29,10.59,7.05a1,1,0,0,0-1.42,0,1,1,0,0,0,0,1.41L12.71,12,9.17,15.54a1,1,0,0,0,0,1.41,1,1,0,0,0,.71.29,1,1,0,0,0,.71-.29l4.24-4.24A1,1,0,0,0,14.83,11.29Z"/></svg>
<div class="a clip" id="i5" style="left:144px;top:1262px;width:443px;height:70px"><span class="t" style="left:12.30px;top:18.00px;font-size:29px;line-height:32px;letter-spacing:0.915px;color:#6e9fff;-webkit-text-stroke:0.6px currentColor;">058d5cd61dbc52f730c5f817fc7<span style="padding-left:8px">e2a6d</span></span></div>
<span class="t" style="left:601.49px;top:1280.00px;font-size:29px;line-height:32px;letter-spacing:0.468px;color:#ccccdc;-webkit-text-stroke:0.6px currentColor;">2026-04-07 11:17:04</span>
<span class="t" style="left:1045.20px;top:1280.00px;font-size:29px;line-height:32px;letter-spacing:0.927px;color:#ccccdc;-webkit-text-stroke:0.6px currentColor;">loadgen.sample-services</span>
<div class="a clip" id="m5" style="left:1478px;top:1262px;width:443px;height:70px"><span class="t" style="left:13.50px;top:18.00px;font-size:29px;line-height:32px;letter-spacing:0.891px;color:#ccccdc;-webkit-text-stroke:0.6px currentColor;">frontend.sample-services.svc.cl<span style="padding-left:8px">uster.local</span></span></div>
<span class="t" style="left:2277.16px;top:1280.00px;font-size:29px;line-height:32px;letter-spacing:-0.143px;color:#ccccdc;-webkit-text-stroke:0.6px currentColor;">10 ms</span>
<div class="a" style="left:44px;top:1404px;width:2324px;height:2px;background:#2f3037;"></div>
<svg class="a" style="left:55.5px;top:1350.5px" width="36" height="36" viewBox="0 0 24 24" fill="#ccccdc"><path d="M14.83,11.29,10.59,7.05a1,1,0,0,0-1.42,0,1,1,0,0,0,0,1.41L12.71,12,9.17,15.54a1,1,0,0,0,0,1.41,1,1,0,0,0,.71.29,1,1,0,0,0,.71-.29l4.24-4.24A1,1,0,0,0,14.83,11.29Z"/></svg>
<div class="a clip" id="i6" style="left:144px;top:1334px;width:443px;height:70px"><span class="t" style="left:12.30px;top:18.00px;font-size:29px;line-height:32px;letter-spacing:0.693px;color:#6e9fff;-webkit-text-stroke:0.6px currentColor;">58000b1e37ca604421585d9522<span style="padding-left:8px">f7a0c1</span></span></div>
<span class="t" style="left:601.49px;top:1352.00px;font-size:29px;line-height:32px;letter-spacing:0.610px;color:#ccccdc;-webkit-text-stroke:0.6px currentColor;">2026-04-07 11:16:23</span>
<span class="t" style="left:1045.20px;top:1352.00px;font-size:29px;line-height:32px;letter-spacing:0.927px;color:#ccccdc;-webkit-text-stroke:0.6px currentColor;">loadgen.sample-services</span>
<div class="a clip" id="m6" style="left:1478px;top:1334px;width:443px;height:70px"><span class="t" style="left:13.50px;top:18.00px;font-size:29px;line-height:32px;letter-spacing:0.891px;color:#ccccdc;-webkit-text-stroke:0.6px currentColor;">frontend.sample-services.svc.cl<span style="padding-left:8px">uster.local</span></span></div>
<span class="t" style="left:2277.16px;top:1352.00px;font-size:29px;line-height:32px;letter-spacing:-0.143px;color:#ccccdc;-webkit-text-stroke:0.6px currentColor;">10 ms</span>
<div class="a" style="left:44px;top:1476px;width:2324px;height:2px;background:#2f3037;"></div>
<svg class="a" style="left:55.5px;top:1422.5px" width="36" height="36" viewBox="0 0 24 24" fill="#ccccdc"><path d="M14.83,11.29,10.59,7.05a1,1,0,0,0-1.42,0,1,1,0,0,0,0,1.41L12.71,12,9.17,15.54a1,1,0,0,0,0,1.41,1,1,0,0,0,.71.29,1,1,0,0,0,.71-.29l4.24-4.24A1,1,0,0,0,14.83,11.29Z"/></svg>
<div class="a clip" id="i7" style="left:144px;top:1406px;width:443px;height:70px"><span class="t" style="left:12.30px;top:18.00px;font-size:29px;line-height:32px;letter-spacing:0.845px;color:#6e9fff;-webkit-text-stroke:0.6px currentColor;">dccd6a427f257fb91592fd79c1b<span style="padding-left:8px">4e07a</span></span></div>
<span class="t" style="left:601.49px;top:1424.00px;font-size:29px;line-height:32px;letter-spacing:0.654px;color:#ccccdc;-webkit-text-stroke:0.6px currentColor;">2026-04-07 11:16:44</span>
<span class="t" style="left:1045.20px;top:1424.00px;font-size:29px;line-height:32px;letter-spacing:0.927px;color:#ccccdc;-webkit-text-stroke:0.6px currentColor;">loadgen.sample-services</span>
<div class="a clip" id="m7" style="left:1478px;top:1406px;width:443px;height:70px"><span class="t" style="left:13.50px;top:18.00px;font-size:29px;line-height:32px;letter-spacing:0.891px;color:#ccccdc;-webkit-text-stroke:0.6px currentColor;">frontend.sample-services.svc.cl<span style="padding-left:8px">uster.local</span></span></div>
<span class="t" style="left:2277.61px;top:1424.00px;font-size:29px;line-height:32px;letter-spacing:-0.255px;color:#ccccdc;-webkit-text-stroke:0.6px currentColor;">12 ms</span>
<svg class="a" style="left:55.5px;top:1494.5px" width="36" height="36" viewBox="0 0 24 24" fill="#ccccdc"><path d="M14.83,11.29,10.59,7.05a1,1,0,0,0-1.42,0,1,1,0,0,0,0,1.41L12.71,12,9.17,15.54a1,1,0,0,0,0,1.41,1,1,0,0,0,.71.29,1,1,0,0,0,.71-.29l4.24-4.24A1,1,0,0,0,14.83,11.29Z"/></svg>
<div class="a clip" id="i8" style="left:144px;top:1478px;width:443px;height:60px"><span class="t" style="left:12.30px;top:18.00px;font-size:29px;line-height:32px;letter-spacing:1.061px;color:#6e9fff;-webkit-text-stroke:0.6px currentColor;">22d03809f94a4c415a210c0de3<span style="padding-left:8px">a8f5b1</span></span></div>
<span class="t" style="left:601.49px;top:1496.00px;font-size:29px;line-height:32px;letter-spacing:0.579px;color:#ccccdc;-webkit-text-stroke:0.6px currentColor;">2026-04-07 11:16:34</span>
<span class="t" style="left:1045.20px;top:1496.00px;font-size:29px;line-height:32px;letter-spacing:0.927px;color:#ccccdc;-webkit-text-stroke:0.6px currentColor;">loadgen.sample-services</span>
<div class="a clip" id="m8" style="left:1478px;top:1478px;width:443px;height:60px"><span class="t" style="left:13.50px;top:18.00px;font-size:29px;line-height:32px;letter-spacing:0.891px;color:#ccccdc;-webkit-text-stroke:0.6px currentColor;">frontend.sample-services.svc.cl<span style="padding-left:8px">uster.local</span></span></div>
<span class="t" style="left:2277.61px;top:1496.00px;font-size:29px;line-height:32px;letter-spacing:-0.255px;color:#ccccdc;-webkit-text-stroke:0.6px currentColor;">13 ms</span>
<div class="a" style="left:28px;top:1538px;width:2356px;height:16px;background:#1a1b1f;"></div>
<svg class="a" style="left:2362px;top:1532px" width="22" height="22" viewBox="0 0 22 22" fill="none" stroke="rgba(204,204,220,0.3)" stroke-width="2" stroke-linecap="round"><path d="M3,21L21,3M11,21L21,11"/></svg>
</div></body></html>
